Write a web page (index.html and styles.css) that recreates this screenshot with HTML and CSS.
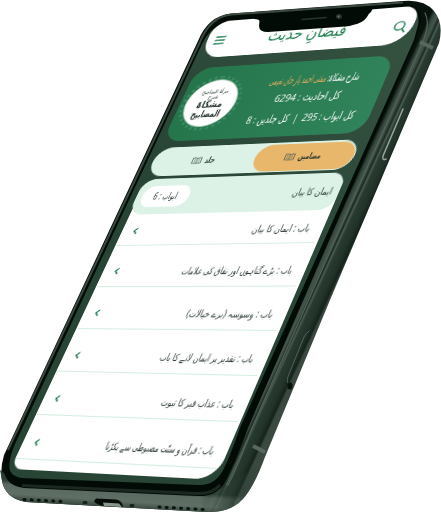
FILE: index.html
```
<!DOCTYPE html>
<html lang="ur">
<head>
<meta charset="utf-8">
<title>فیضان حدیث</title>
<link rel="stylesheet" href="styles.css">
</head>
<body>
<main class="stage">
  <svg class="layer" viewBox="0 0 441 513" aria-hidden="true">
    <defs>
      <linearGradient id="side" gradientUnits="userSpaceOnUse" x1="331" y1="230" x2="356" y2="241.500">
        <stop offset="0" stop-color="#08120d"/><stop offset=".12" stop-color="#34463c"/>
        <stop offset=".25" stop-color="#46564d"/><stop offset=".36" stop-color="#1b2b22"/>
        <stop offset=".42" stop-color="#4a5b51"/><stop offset=".5" stop-color="#293a30"/>
        <stop offset=".75" stop-color="#22332a"/><stop offset=".92" stop-color="#15231b"/>
        <stop offset="1" stop-color="#3a4940"/>
      </linearGradient>
      <linearGradient id="base" gradientUnits="userSpaceOnUse" x1="110" y1="487" x2="108.500" y2="509">
        <stop offset="0" stop-color="#2c3d34"/><stop offset=".2" stop-color="#5a6a61"/>
        <stop offset=".6" stop-color="#5f6f66"/><stop offset="1" stop-color="#2b3b32"/>
      </linearGradient>
      <linearGradient id="fade" gradientUnits="userSpaceOnUse" x1="200" y1="0" x2="262" y2="0">
        <stop offset="0" stop-color="#fff"/><stop offset="1" stop-color="#000"/>
      </linearGradient>
      <mask id="left"><rect width="441" height="513" fill="url(#fade)"/></mask>
      <linearGradient id="glass" gradientUnits="userSpaceOnUse" x1="380" y1="40" x2="170" y2="200">
        <stop offset="0" stop-color="#34503f"/><stop offset="1" stop-color="#274435"/>
      </linearGradient>
    </defs>
    <path id="shell" d="M231 13.500 L403 1 Q424-1 434 11 Q444 23 439 43 L330 300 L265 457 Q254 487 243 499 Q230 513 207 512 L26 502 Q8 499 3 485 Q-1 472 4 455 L198 41 Q208 16 231 13.500Z" fill="url(#side)"/>
    <path d="M0 470 L12 480 L215 493 L250 470 L262 464 Q254 487 243 499 Q230 513 207 512 L26 502 Q8 499 3 485Z" fill="url(#base)" mask="url(#left)"/>
    <path d="M231 14.500 L400 3.500 Q422 3 421 21 Q420 30 417 37 L248 428 Q235 464 224 484 Q216 497 197 496 L24 488 Q7 486 4 472 Q3 463 8 450 L200 42 Q210 17 231 14.500Z" fill="#030b07"/>
    <path d="M22 485.500 L197 493.500 Q213 494 220 485" fill="none" stroke="#1b2821" stroke-width="3"/>
    <path d="M8 450 L200 42 Q210 17 231 14.500 L403 2.500" fill="none" stroke="#3b4a41" stroke-width="2"/>
    <path d="M232 22 L403 8 Q421 7 418 25 L414 40 L240 428 Q229 459 223 470 Q215 486 198 485 L22 478 Q8 476 9.500 464 Q10 455 15 444 L202 44 Q212 23 232 22Z" fill="url(#glass)"/>
    <g fill="none" stroke-linecap="round">
      <path d="M425 13 Q430 22 424 39 L252 428 Q239 464 228 485" stroke="#52645a" stroke-width="1.200"/>
      <path d="M420 42 L433 48 M253 446 L265 452" stroke="#58675e" stroke-width="4" stroke-linecap="butt"/>
      <path d="M403 109 L383 156 Q382 161 386 159" stroke="#98a59d" stroke-width="1.500"/>
      <path d="M309 331 Q306 333 304 337 L289 374 Q286 381 288 383" stroke="#50625a" stroke-width="1"/>
      <path d="M24 499.500 L63 501.500 M159 507 L204 509.500" stroke="#0b1510" stroke-width="3" stroke-dasharray="1 6.200"/>
      <path d="M84 502.500 h2 M131 505.500 h2" stroke="#16221b" stroke-width="3"/>
    </g>
    <ellipse cx="290" cy="386" rx="2.500" ry="3.500" fill="#08110c"/>
    <path d="M96 498.500 L116 499.500 Q122 500 123 507 L103 506 Q95 504 94 501Z" fill="#060d09"/>
    <path d="M103 502.500 L119 503.500 L122 507 L104 506Z" fill="#87958d"/>
  </svg>

  <div class="screen" dir="rtl">
    <header class="bar">
      <svg class="search" viewBox="0 0 14 14"><circle cx="6.500" cy="5.800" r="4.700"/><path d="M9.800 9.200 L13 13"/></svg>
      <svg class="fit title" width="82" height="28"><text x="41" y="19.500" textLength="80" lengthAdjust="spacingAndGlyphs">فیضانِ حدیث</text></svg>
      <svg class="menu" viewBox="0 0 12 12"><path d="M1 2H11M1 6H11M1 10H11"/></svg>
    </header>

    <section class="card">
      <div class="facts">
        <svg class="fit" width="94" height="20"><text x="46" y="14" textLength="90" lengthAdjust="spacingAndGlyphs">شارح مشکاۃ: <tspan class="gold">مفتی احمد یار خان نعیمی</tspan></text></svg>
        <svg class="fit" width="94" height="20"><text x="47" y="14" textLength="66" lengthAdjust="spacingAndGlyphs">کل احادیث : 6294</text></svg>
        <svg class="fit" width="112" height="24"><text x="57.500" y="17" textLength="108" lengthAdjust="spacingAndGlyphs">کل ابواب : 295 &#160;|&#160; کل جلدیں : 8</text></svg>
      </div>
      <div class="seal">
        <svg class="fit" width="40" height="44">
          <text class="s1" x="20" y="11" textLength="28" lengthAdjust="spacingAndGlyphs">مرآۃ المناجیح</text>
          <text class="s1" x="20" y="17">شرح</text>
          <text class="s2" x="20" y="27" textLength="27" lengthAdjust="spacingAndGlyphs">مشکاۃ</text>
          <text class="s2" x="20" y="38" textLength="30" lengthAdjust="spacingAndGlyphs">المصابیح</text>
        </svg>
      </div>
    </section>

    <nav class="tabs">
      <div class="tab active">
        <svg class="fit" width="24" height="18"><text x="12" y="12" textLength="22" lengthAdjust="spacingAndGlyphs">مضامین</text></svg>
        <svg class="book" viewBox="0 0 10 8"><path d="M.5 1H4L5 2 6 1H9.500V7H6L5 7.500 4 7H.5ZM5 2V7M2 3H3.500M2 5H3.500M6.500 3H8M6.500 5H8"/></svg>
      </div>
      <div class="tab">
        <svg class="fit" width="12" height="18"><text x="6" y="12" textLength="10" lengthAdjust="spacingAndGlyphs">جلد</text></svg>
        <svg class="book" viewBox="0 0 10 8"><path d="M.5 1H4L5 2 6 1H9.500V7H6L5 7.500 4 7H.5ZM5 2V7M2 3H3.500M2 5H3.500M6.500 3H8M6.500 5H8"/></svg>
      </div>
    </nav>

    <section class="list">
      <div class="head">
        <svg class="fit" width="40" height="20"><text x="20" y="13" textLength="38" lengthAdjust="spacingAndGlyphs">ایمان کا بیان</text></svg>
        <div class="count"><svg class="fit" width="28" height="18"><text x="14" y="12" textLength="25" lengthAdjust="spacingAndGlyphs">ابواب : 6</text></svg></div>
      </div>
      <div class="row first"><svg class="fit" width="58" height="20"><text x="29" y="14" textLength="56" lengthAdjust="spacingAndGlyphs">باب : ایمان کا بیان</text></svg><svg class="chev" viewBox="0 0 5 8"><path d="M4 1 1 4 4 7"/></svg></div>
      <div class="row"><svg class="fit" width="110" height="20"><text x="55" y="14" textLength="109" lengthAdjust="spacingAndGlyphs">باب : بڑے گناہوں اور نفاق کی علامات</text></svg><svg class="chev" viewBox="0 0 5 8"><path d="M4 1 1 4 4 7"/></svg></div>
      <div class="row"><svg class="fit" width="86" height="20"><text x="43" y="14" textLength="84" lengthAdjust="spacingAndGlyphs">باب : وسوسہ (برے خیالات)</text></svg><svg class="chev" viewBox="0 0 5 8"><path d="M4 1 1 4 4 7"/></svg></div>
      <div class="row"><svg class="fit" width="93" height="20"><text x="46.500" y="14" textLength="91" lengthAdjust="spacingAndGlyphs">باب : تقدیر پر ایمان لانے کا باب</text></svg><svg class="chev" viewBox="0 0 5 8"><path d="M4 1 1 4 4 7"/></svg></div>
      <div class="row"><svg class="fit" width="72" height="20"><text x="36" y="14" textLength="70" lengthAdjust="spacingAndGlyphs">باب : عذاب قبر کا ثبوت</text></svg><svg class="chev" viewBox="0 0 5 8"><path d="M4 1 1 4 4 7"/></svg></div>
      <div class="row"><svg class="fit" width="107" height="20"><text x="53.500" y="14" textLength="105" lengthAdjust="spacingAndGlyphs">باب : قرآن و سنّت مضبوطی سے پکڑنا</text></svg><svg class="chev" viewBox="0 0 5 8"><path d="M4 1 1 4 4 7"/></svg></div>
    </section>
  </div>

  <svg class="layer" viewBox="0 0 441 513" aria-hidden="true">
    <path d="M252 16 L373 8 L371 12 Q368 14 367 17 Q363 23 353 25 Q350 26 345 26.500 L268 32 Q259 32 259 26 L259.500 21 Q259 19 254 19Z" fill="#030b07"/>
    <path d="M302 19.500 L326 17.500" stroke="#26362d" stroke-width="1.500" stroke-linecap="round"/>
    <ellipse cx="339" cy="16.500" rx="3" ry="2.500" fill="#25352c"/>
    <circle cx="338.500" cy="16.500" r="1" fill="#6d7c74"/>
  </svg>
</main>
</body>
</html>
```
FILE: styles.css
```
* { box-sizing: border-box; }
body { margin: 0; background: #fff; overflow: hidden; }
.stage { position: relative; width: 441px; height: 513px; overflow: hidden; }
.layer { position: absolute; inset: 0; width: 441px; height: 513px; }

/* The flat screen is projected onto the tilted phone. */
.screen {
  position: absolute;
  left: 0;
  top: 0;
  width: 215px;
  transform-origin: 0 0;
  transform: matrix3d(0.90227, -0.0827, 0, -0.0002785, -0.45777, 0.88097, 0, -0.00019, 0, 0, 1, 0, 224.25, 23.06, 0, 1.05105);
  font-family: "Open Sans", "DejaVu Sans Condensed", "DejaVu Sans", sans-serif;
}

.fit { display: block; flex: none; overflow: visible; }
.fit text { text-anchor: middle; direction: rtl; font-size: 10px; fill: #22332b; }

.bar {
  display: flex;
  align-items: center;
  justify-content: space-between;
  width: 212px;
  height: 43px;
  padding: 3px 6px 0 8px;
  background: #fff;
  border-radius: 16px 16px 24px 21px;
}
.search { width: 14px; height: 14px; }
.menu { width: 12px; height: 12px; }
.search, .menu { fill: none; stroke: #16794a; stroke-width: 1.4; stroke-linecap: round; }
.bar .title text { font-size: 18px; fill: #1c7c4c; }

.card {
  display: flex;
  align-items: flex-start;
  justify-content: space-between;
  width: 204px;
  height: 84px;
  margin: 12px 5px 0 0;
  padding: 11px 15px 0 6px;
  border-radius: 18px;
  background: linear-gradient(to left, #30835a, #25754b);
}
.facts { display: flex; flex-direction: column; align-items: center; }
.facts .fit text { fill: #fff; font-size: 11.5px; }
.facts .fit .gold { fill: #e5ad5c; }
.seal {
  display: grid;
  place-items: center;
  width: 54px;
  height: 54px;
  margin-top: 4px;
  border: 1.5px solid #a9ccb9;
  border-radius: 50%;
  background: #fff;
  outline: 3px dotted #3b8a63;
  outline-offset: 1px;
}
.seal .s1 { font-size: 6px; }
.seal .s2 { font-size: 11px; font-weight: bold; }

.tabs {
  display: flex;
  width: 206px;
  height: 32px;
  margin: 7px 3px 0 0;
  padding: 1.5px;
  border-radius: 16px;
  background: #dcf2e6;
}
.tab { display: flex; flex: 1; align-items: center; justify-content: center; gap: 3px; border-radius: 15px; }
.tab.active { flex: none; width: 98px; background: #e8b76c; }
.tab .fit text { font-weight: bold; font-size: 9px; }
.book { width: 10px; height: 8px; fill: none; stroke: #4d5a50; stroke-width: .8; }

.list {
  width: 204px;
  height: 303px;
  margin: 3px 3px 0 0;
  background: #fff;
  border-radius: 14px 14px 20px 12px;
}
.head {
  display: flex;
  align-items: center;
  justify-content: space-between;
  height: 39px;
  margin-left: -2px;
  padding: 0 6px;
  border-radius: 14px;
  background: #dcf2e6;
}
.count { display: grid; place-items: center; width: 50px; height: 23px; border-radius: 11px; background: #fff; }
.row {
  display: flex;
  align-items: center;
  justify-content: space-between;
  height: 44px;
  margin: 0 3px 0 1px;
  padding: 11px 9px 0 11px;
  border-bottom: 1px solid #d4eedf;
}
.row.first { height: 34px; padding-top: 3px; }
.chev { width: 5px; height: 8px; fill: none; stroke: #16794a; stroke-width: 1.4; }
```
